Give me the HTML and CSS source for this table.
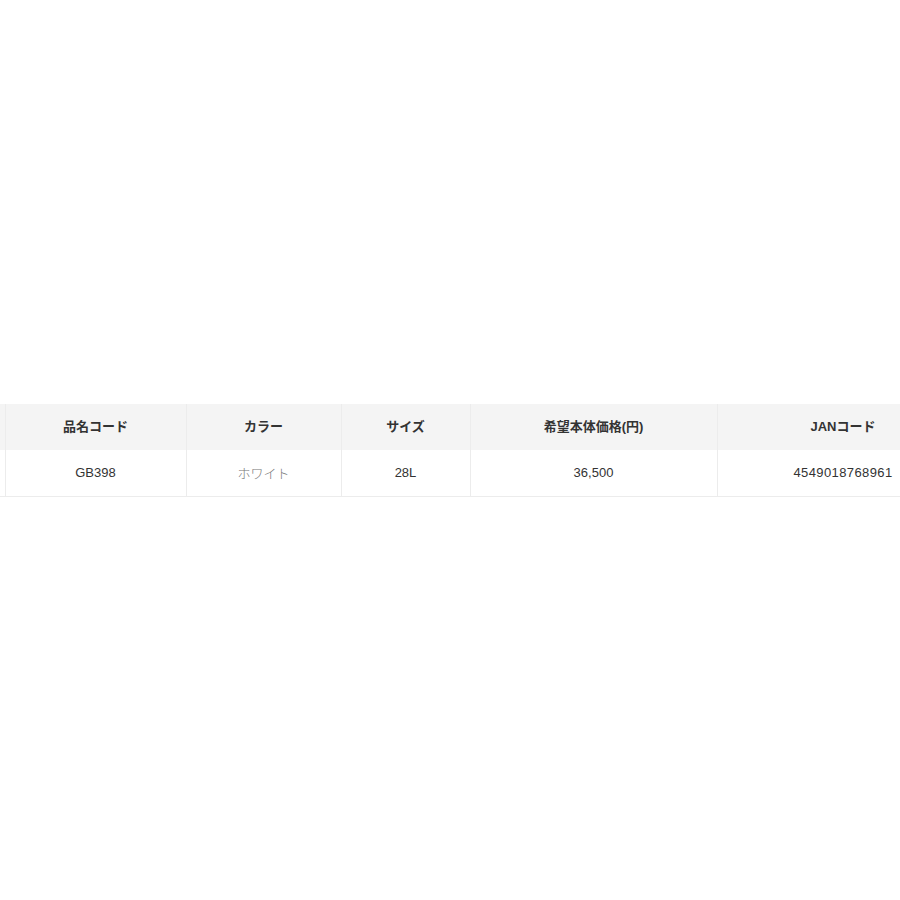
FILE: index.html
```html
<!DOCTYPE html>
<html lang="ja">
<head>
<meta charset="utf-8">
<title>製品仕様</title>
<link rel="stylesheet" href="styles.css">
</head>
<body>
<div class="page">
  <div class="table-wrap">
    <table class="spec">
      <colgroup>
        <col class="c0">
        <col class="c1">
        <col class="c2">
        <col class="c3">
        <col class="c4">
        <col class="c5">
      </colgroup>
      <thead>
        <tr>
          <th class="edge"></th>
          <th>品名コード</th>
          <th>カラー</th>
          <th>サイズ</th>
          <th>希望本体価格(円)</th>
          <th>JANコード</th>
        </tr>
      </thead>
      <tbody>
        <tr>
          <td class="edge"></td>
          <td>GB398</td>
          <td class="color">ホワイト</td>
          <td>28L</td>
          <td>36,500</td>
          <td class="jan">4549018768961</td>
        </tr>
      </tbody>
    </table>
  </div>
</div>
</body>
</html>
```

FILE: styles.css
```css
html, body {
  margin: 0;
  padding: 0;
  background: #ffffff;
}

body {
  font-family: "Liberation Sans", Arial, "Noto Sans CJK JP", sans-serif;
  color: #333333;
}

.page {
  width: 900px;
  height: 900px;
  overflow: hidden;
  padding-top: 404px;
  box-sizing: border-box;
}

.table-wrap {
  width: 900px;
  overflow: hidden;
}

.spec {
  width: 969px;
  table-layout: fixed;
  border-collapse: collapse;
  font-size: 13px;
}

.c0 { width: 5px; }
.c1 { width: 181px; }
.c2 { width: 155px; }
.c3 { width: 129px; }
.c4 { width: 247px; }
.c5 { width: 252px; }

.spec th,
.spec td {
  text-align: center;
  border-left: 1px solid #ececec;
  border-right: 1px solid #ececec;
}

.spec th {
  background: #f4f4f4;
  height: 43px;
  padding: 0 0 3px;
  font-weight: bold;
  color: #333333;
  border-bottom: 0;
}

.spec td {
  height: 45px;
  padding: 0 0 1px;
  border-bottom: 1px solid #ececec;
  color: #333333;
}

.spec .edge {
  border-left: 0;
}

.spec td.color {
  font-family: "Noto Sans CJK JP", sans-serif;
  font-weight: 300;
  color: #777777;
}

.spec td.jan {
  letter-spacing: 0.4px;
}
```
